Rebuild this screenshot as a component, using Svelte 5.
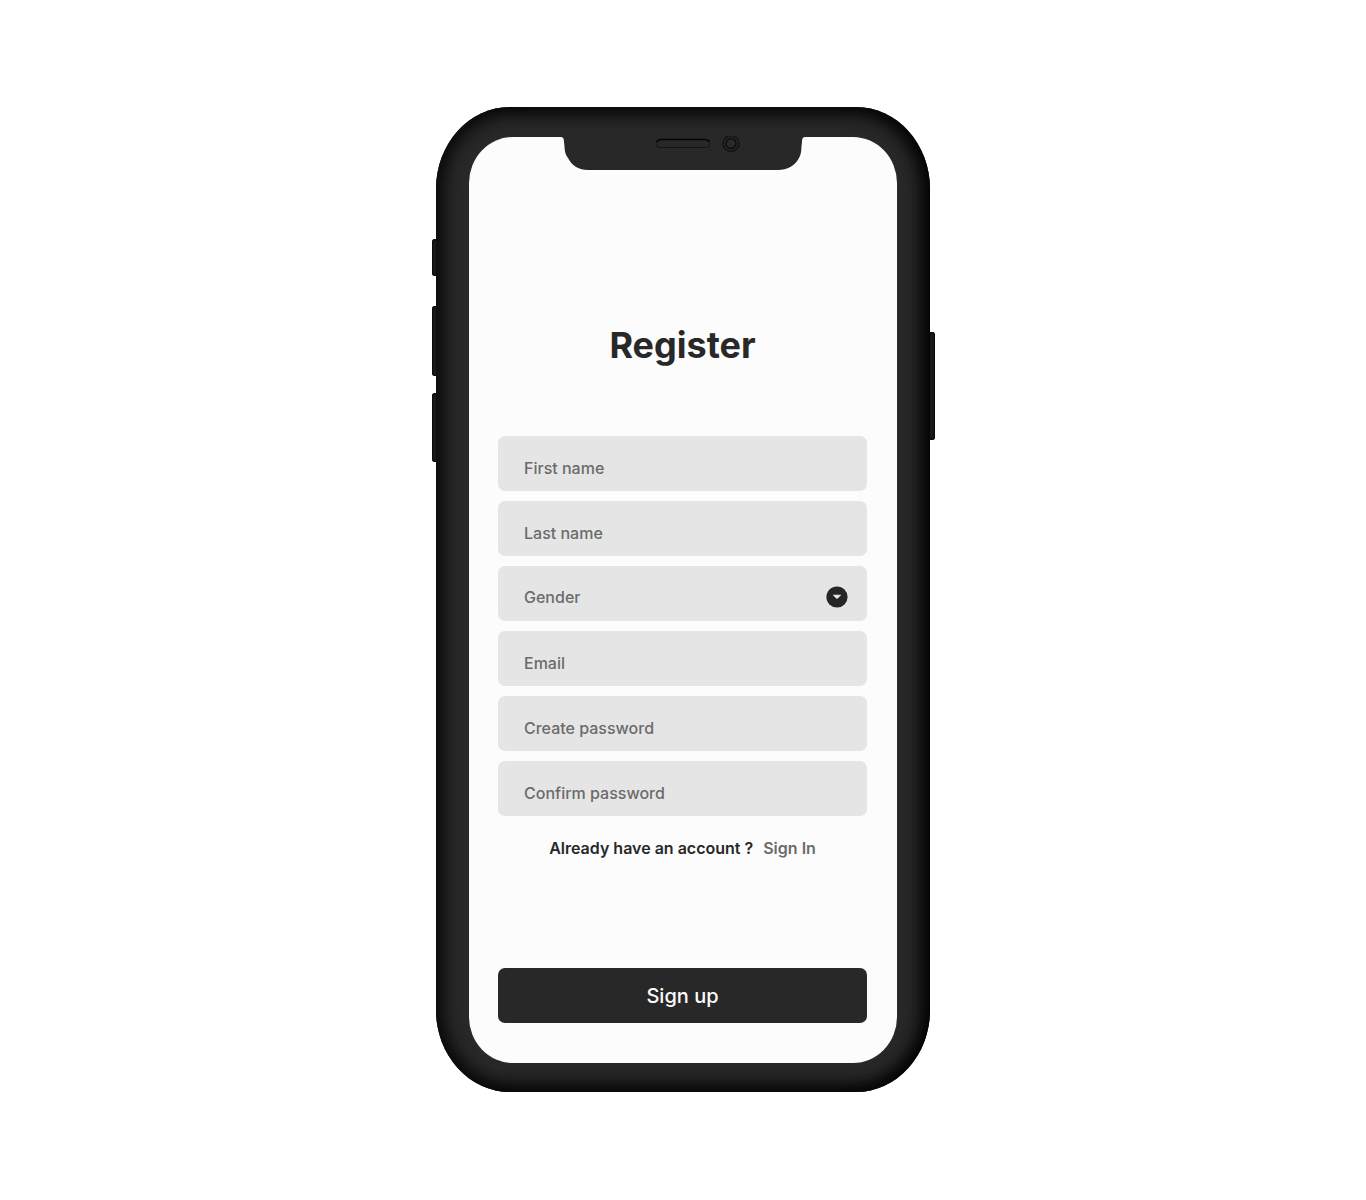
<script>
  const fields = [
    { id: 'first-name', label: 'First name', type: 'text' },
    { id: 'last-name', label: 'Last name', type: 'text' },
    { id: 'gender', label: 'Gender', options: ['Female', 'Male', 'Other'] },
    { id: 'email', label: 'Email', type: 'email' },
    { id: 'password', label: 'Create password', type: 'password' },
    { id: 'confirm', label: 'Confirm password', type: 'password' }
  ];
</script>

<main>
  <div class="phone">
    <span class="key mute"></span>
    <span class="key volume-up"></span>
    <span class="key volume-down"></span>
    <span class="key power"></span>
    <div class="body">
      <div class="screen">
        <svg class="notch" viewBox="0 0 246 34" width="246" height="34" aria-hidden="true">
          <path d="M0 0V1C3 1 4 2 4 6C5 12 4 17 8 22C12 30 19 34 28 34H218C227 34 235 30 239 22C242 17 241 12 242 6C242 2 243 1 246 1V0Z" fill="#282828" />
          <rect x="96" y="3.5" width="54" height="8" rx="4" fill="#282828" stroke="#161616" />
          <path d="M97 6Q98 3.5 101 3.5H145Q148 3.5 149 6" fill="none" stroke="#050505" stroke-width="1.6" />
          <circle cx="171" cy="7.5" r="8" fill="#262626" stroke="#121212" stroke-width="1.3" />
          <circle cx="171" cy="7.5" r="5" fill="#292929" stroke="#0c0c0c" stroke-width="1.3" />
        </svg>
        <form onsubmit={(e) => e.preventDefault()}>
          <h1>Register</h1>
          <div class="fields">
            {#each fields as f (f.id)}
              {#if f.options}
                <div class="select">
                  <select id={f.id} aria-label={f.label}>
                    <option value="">{f.label}</option>
                    {#each f.options as o}<option>{o}</option>{/each}
                  </select>
                  <svg class="arrow" viewBox="0 0 22 22" width="22" height="22" aria-hidden="true">
                    <circle cx="11" cy="11" r="10.6" fill="#262626" />
                    <path d="M7.4 9.2H14.6L11 12.6Z" fill="#f4f4f4" stroke="#f4f4f4" stroke-width=".8" stroke-linejoin="round" />
                  </svg>
                </div>
              {:else}
                <input id={f.id} type={f.type} placeholder={f.label} aria-label={f.label} />
              {/if}
            {/each}
          </div>
          <p>Already have an account ?<a href="#signin">Sign In</a></p>
          <button type="submit">Sign up</button>
        </form>
      </div>
    </div>
  </div>
</main>

<style>
  :global(body) {
    background: #fff;
  }
  main {
    display: flex;
    justify-content: center;
    padding: 107px 16px;
    font-family: Inter, 'Liberation Sans', sans-serif;
    color: #282828;
  }
  .phone {
    position: relative;
    width: 100%;
    max-width: 494px;
  }
  .body {
    position: relative;
    box-sizing: border-box;
    padding: 30px 33px 29px;
    border-radius: 74px / 82px;
    background: #282828;
    box-shadow:
      inset 9px 0 18px -4px #0c0c0c,
      inset -10px 0 20px -3px #020202,
      inset 0 9px 18px -4px #0c0c0c,
      inset 0 -9px 18px -4px #060606;
  }
  .key {
    position: absolute;
    left: -4px;
    width: 8px;
    border-radius: 3px;
    background: #1a1a1a;
    box-shadow: inset 0 0 2px 1px #080808;
  }
  .mute {
    top: 132px;
    height: 37px;
  }
  .volume-up {
    top: 199px;
    height: 70px;
  }
  .volume-down {
    top: 286px;
    height: 69px;
  }
  .power {
    left: auto;
    right: -5px;
    top: 225px;
    height: 108px;
  }
  .screen {
    position: relative;
    padding: 184px 30px 40px 29px;
    border-radius: 44px / 46px;
    background: #fcfcfc;
  }
  .notch {
    position: absolute;
    top: -1px;
    left: 50%;
    margin-left: -123px;
  }
  form {
    display: flex;
    flex-direction: column;
  }
  h1 {
    margin: 0 0 67px;
    font-size: 36px;
    line-height: 48px;
    font-weight: 700;
    text-align: center;
  }
  .fields {
    display: flex;
    flex-direction: column;
    gap: 10px;
  }
  input,
  select {
    display: block;
    box-sizing: border-box;
    width: 100%;
    height: 55px;
    margin: 0;
    padding: 9px 26px 0;
    border: 0;
    border-radius: 7px;
    background: #e5e5e5;
    color: #6b6b6b;
    font: 500 16px/20px Inter, 'Liberation Sans', sans-serif;
    appearance: none;
  }
  select {
    padding-top: 7px;
  }
  input::placeholder {
    color: #6b6b6b;
    opacity: 1;
  }
  .select {
    position: relative;
  }
  .arrow {
    position: absolute;
    right: 19px;
    top: 20px;
    pointer-events: none;
  }
  p {
    display: flex;
    justify-content: center;
    gap: 10px;
    margin: 20px 0 108px;
    font-size: 16px;
    line-height: 24px;
    font-weight: 600;
  }
  a {
    color: #6b6b6b;
    text-decoration: none;
  }
  button {
    height: 55px;
    padding: 0;
    border: 0;
    border-radius: 7px;
    background: #282828;
    color: #fcfcfc;
    font: 500 20px/24px Inter, 'Liberation Sans', sans-serif;
    cursor: pointer;
  }
</style>
